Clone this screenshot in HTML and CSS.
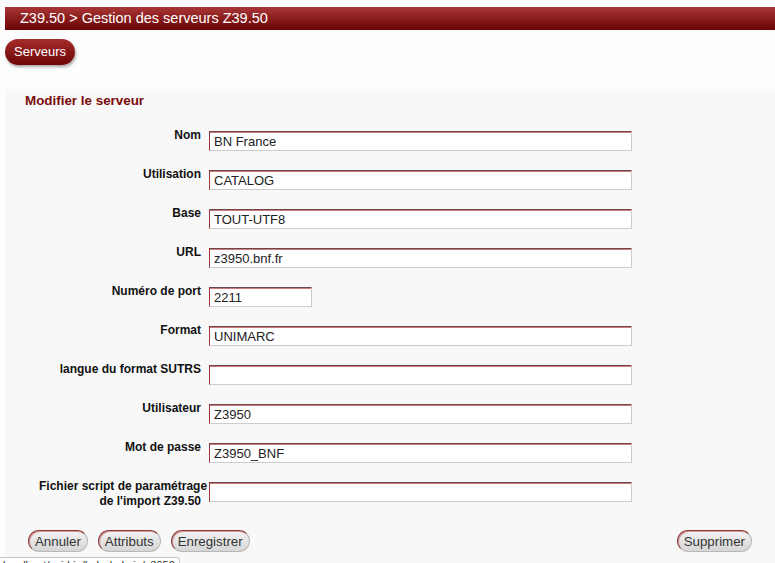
FILE: index.html
```html
<!DOCTYPE html>
<html lang="fr">
<head>
<meta charset="utf-8">
<title>Gestion des serveurs Z39.50</title>
<link rel="stylesheet" href="styles.css">
</head>
<body>
<div class="page">
  <div class="header">Z39.50 &gt; Gestion des serveurs Z39.50</div>
  <div class="tabs"><a class="tab" href="#">Serveurs</a></div>
  <div class="panel">
    <h2 class="title">Modifier le serveur</h2>
    <form class="form">
      <label class="lbl">Nom</label><input class="field" type="text" value="BN France">
      <label class="lbl">Utilisation</label><input class="field" type="text" value="CATALOG">
      <label class="lbl">Base</label><input class="field" type="text" value="TOUT-UTF8">
      <label class="lbl">URL</label><input class="field" type="text" value="z3950.bnf.fr">
      <label class="lbl">Numéro de port</label><input class="field short" type="text" value="2211">
      <label class="lbl">Format</label><input class="field" type="text" value="UNIMARC">
      <label class="lbl">langue du format SUTRS</label><input class="field" type="text" value="">
      <label class="lbl">Utilisateur</label><input class="field" type="text" value="Z3950">
      <label class="lbl">Mot de passe</label><input class="field" type="text" value="Z3950_BNF">
      <label class="lbl nowrap">Fichier script de paramétrage<br>de l'import Z39.50</label><input class="field" type="text" value="">
    </form>
    <div class="actions">
      <div class="left">
        <button class="btn" type="button">Annuler</button>
        <button class="btn" type="button">Attributs</button>
        <button class="btn" type="button">Enregistrer</button>
      </div>
      <button class="btn" type="button">Supprimer</button>
    </div>
  </div>
</div>
<div class="status">localhost/cgi-bin/koha/admin/z3950</div>
</body>
</html>
```
FILE: styles.css
```css
html, body {
  margin: 0;
  padding: 0;
  background: #fdfdfd;
  font-family: "Liberation Sans", Arial, sans-serif;
  overflow: hidden;
}
.page {
  padding: 7px 0 0 5px;
}
.header {
  height: 23px;
  line-height: 23px;
  padding-left: 15px;
  color: #fff;
  font-size: 14.5px;
  background: linear-gradient(to bottom, #aa3636, #6a0303);
}
.tabs {
  margin-top: 9px;
  display: flex;
}
.tab {
  display: block;
  height: 26px;
  line-height: 25px;
  padding: 0 9px;
  border-radius: 13px;
  color: #fff;
  font-size: 13px;
  text-decoration: none;
  background: linear-gradient(to bottom, #a62c2c, #6c0505);
  box-shadow: 1px 2px 3px rgba(0, 0, 0, 0.35);
}
.panel {
  margin-top: 24px;
  background: #f8f8f8;
  padding: 4px 23px 40px 0;
  min-height: 440px;
}
.title {
  margin: 0;
  padding-left: 20px;
  font-size: 13.4px;
  line-height: 16px;
  font-weight: bold;
  color: #7b0c0c;
}
.form {
  display: grid;
  grid-template-columns: 162px 423px;
  column-gap: 8px;
  row-gap: 19px;
  align-items: start;
  padding-left: 34px;
  margin-top: 22px;
}
.lbl {
  margin-top: -3px;
  text-align: right;
  font-size: 12px;
  line-height: 15px;
  font-weight: bold;
  color: #111;
}
.nowrap {
  white-space: nowrap;
}
.field {
  box-sizing: border-box;
  height: 20px;
  width: 423px;
  margin: 0;
  padding: 0 0 0 4px;
  font-family: "Liberation Sans", Arial, sans-serif;
  font-size: 13px;
  color: #222;
  background: #fff;
  border-style: solid;
  border-width: 1px;
  border-color: #6e4848 #cccccc #cccccc #a03434;
  box-shadow: inset 0 1px 0 #cf7a7a;
  outline: none;
}
.short {
  width: 103px;
}
.actions {
  display: flex;
  justify-content: space-between;
  margin-top: 21px;
  padding-left: 23px;
}
.left {
  display: flex;
  gap: 10px;
}
.btn {
  box-sizing: border-box;
  height: 22px;
  margin: 0;
  padding: 0 6px;
  font-family: "Liberation Sans", Arial, sans-serif;
  font-size: 13.3px;
  color: #333;
  border-radius: 11px;
  border: 1px solid #b8b8b8;
  border-top-color: #8e3a3a;
  border-left-color: #8e3a3a;
  box-shadow: inset 1px 1px 0 #d49a9a;
  background: linear-gradient(to bottom, #f2f2f2, #d6d6d6);
}
.status {
  position: fixed;
  left: 0;
  bottom: -12px;
  width: 176px;
  height: 16px;
  padding: 1px 0 0 3px;
  font-size: 11px;
  color: #333;
  background: #fff;
  border-top: 1px solid #c8c8c8;
  border-right: 1px solid #c8c8c8;
  border-top-right-radius: 3px;
  overflow: hidden;
  white-space: nowrap;
}
```
